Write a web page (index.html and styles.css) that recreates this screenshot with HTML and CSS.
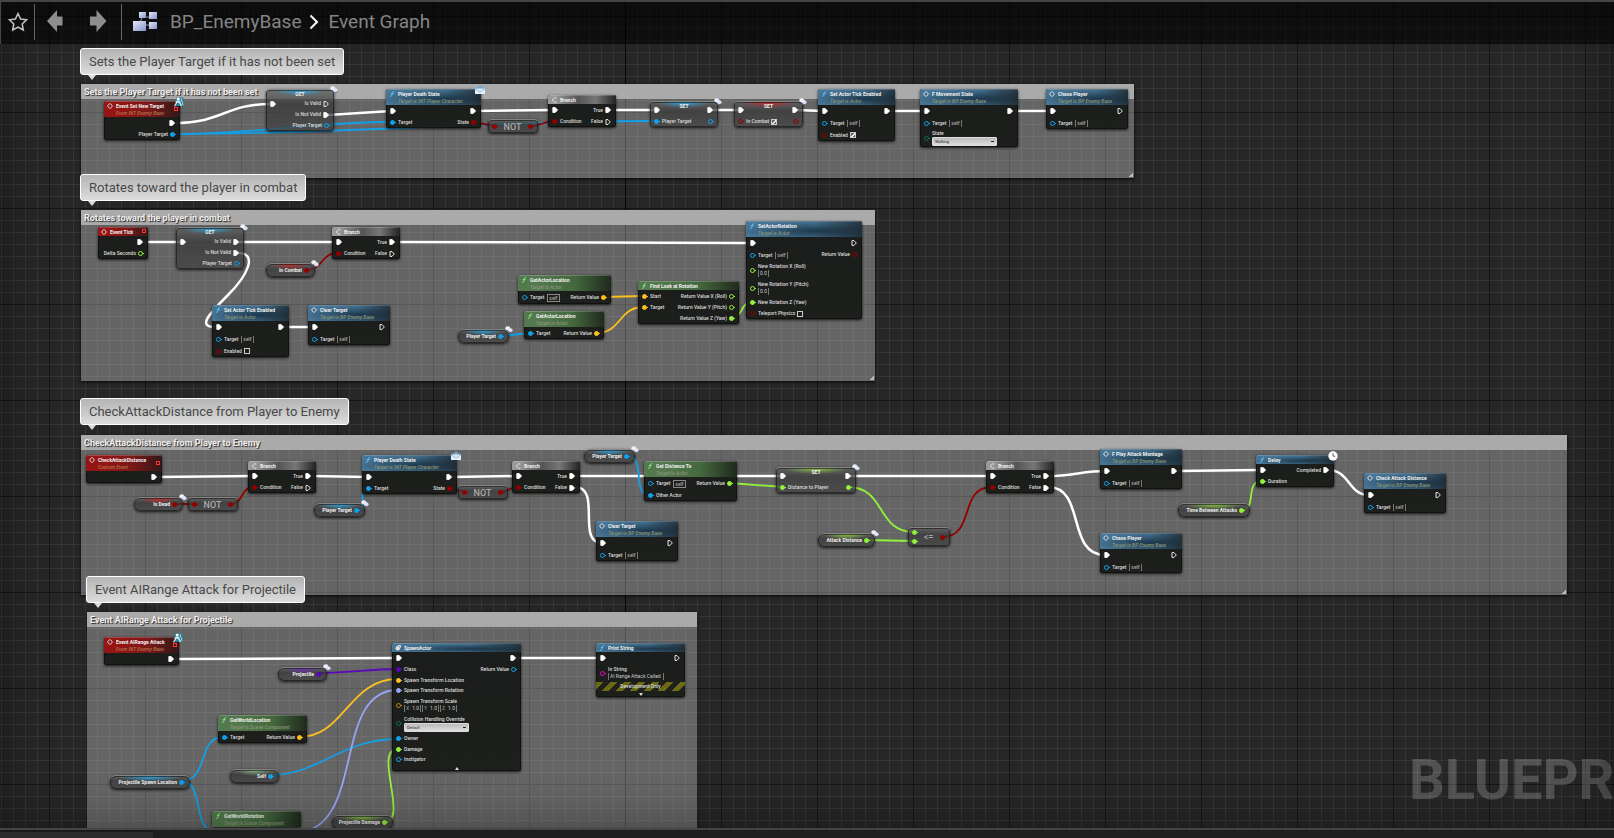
FILE: index.html
```html
<!DOCTYPE html>
<html lang="en">
<head>
<meta charset="utf-8">
<title>BP_EnemyBase – Event Graph</title>
<link rel="stylesheet" href="styles.css">
</head>
<body>
<svg class="defs" aria-hidden="true">
  <defs>
    <symbol id="x1" viewBox="0 0 6 6"><path d="M.8.5h2.4L5.6 3 3.200 5.500H.8z" fill="#fff" stroke="#fff" stroke-width=".8" stroke-linejoin="round"/></symbol>
    <symbol id="x0" viewBox="0 0 6 6"><path d="M1 .6h2L5.300 3 3 5.400H1z" fill="none" stroke="#fff" stroke-width=".9" stroke-linejoin="round"/></symbol>
    <symbol id="fn" viewBox="0 0 6 6"><path d="M5.200.7C3.500.2 3.400 1.500 3.100 3S2.500 5.700.9 5.300M1.800 2.600h2.600" fill="none" stroke="currentColor" stroke-width=".9"/></symbol>
    <symbol id="ev" viewBox="0 0 6 6"><path d="M2.400.6.6 3l1.800 2.400M3.500.6 5.400 3 3.500 5.400M2.600.8h.8M2.600 5.200h.8" fill="none" stroke="currentColor" stroke-width=".9"/></symbol>
    <symbol id="br" viewBox="0 0 6 6"><path d="M5.400.9H3.500L1 3l2.500 2.100h1.900" fill="none" stroke="currentColor" stroke-width="1" stroke-dasharray="2.200 .5"/></symbol>
    <symbol id="sp" viewBox="0 0 6 6"><circle cx="2.800" cy="3.300" r="2.300" fill="#ddd"/><path d="M3 .5h2.600v2.200" fill="none" stroke="#fff" stroke-width=".8"/></symbol>
    <symbol id="clover" viewBox="0 0 8 8"><ellipse cx="2.800" cy="2.300" rx="2.500" ry="2" fill="#eef1fa"/><ellipse cx="5.300" cy="4.200" rx="2.300" ry="1.900" fill="#dfe5f5"/><path d="M3 5.600C4.500 7 7 7 7.600 5.200" fill="none" stroke="#6a7796" stroke-width="1"/></symbol>
    <symbol id="mail" viewBox="0 0 10 10"><path d="M0 4 5 .6 10 4z" fill="#6fa5cf"/><path d="M0 3.600h10V9H0z" fill="#e4f0f8"/><path d="M0 3.600 5 7l5-3.400" fill="none" stroke="#8fb9d8" stroke-width="1"/></symbol>
    <symbol id="iface" viewBox="0 0 10 10"><path d="M2 .5h7.500V9H2z" fill="#2b7f9b"/><path d="M7 1 9 8" stroke="#9fd8e6" stroke-width="1"/><circle cx="4.200" cy="2" r="1.500" fill="#fff"/><path d="M.6 9.300l2.600-5L6 6l1.500 3M1.500 5l5-1" stroke="#e8f7fb" stroke-width="1.200" fill="none"/></symbol>
    <symbol id="clock" viewBox="0 0 10 10"><circle cx="5" cy="5" r="4.700" fill="#fff"/><path d="M5 2v3.200h2.200" fill="none" stroke="#555" stroke-width=".9"/></symbol>
  </defs>
</svg>

<main class="graph">
  <div class="canvas">
    <p class="watermark">BLUEPRINT</p>

    <section class="comment c-target"><h2>Sets the Player Target if it has not been set</h2></section>
    <section class="comment c-rotate"><h2>Rotates toward the player in combat</h2></section>
    <section class="comment c-check"><h2>CheckAttackDistance from Player to Enemy</h2></section>
    <section class="comment c-range"><h2>Event AIRange Attack for Projectile</h2></section>

    <svg class="wires" aria-hidden="true">
      <g class="w-exec">
        <path d="M174 123C224 123 224 104 271 104"/><path d="M328 115 391 111"/><path d="M475 111 553 110"/><path d="M610 110H655"/><path d="M711 110H740"/><path d="M796 110 823 111"/><path d="M889 111H925"/><path d="M1012 111H1051"/>
        <path d="M142 242H182"/><path d="M237 242H336"/><path d="M238 253C258 253 248 275 228 295C206 317 198 327 216 327"/><path d="M283 327H313"/><path d="M395 242 750 243"/>
        <path d="M156 477 253 476"/><path d="M311 476 367 477"/><path d="M451 477 517 476"/><path d="M574 476H782"/><path d="M850 476H991"/><path d="M575 487C602 487 576 543 602 543"/>
        <path d="M1048 476C1070 476 1085 471 1105 471"/><path d="M1048 487C1086 487 1066 555 1105 555"/><path d="M1176 471 1260 470"/><path d="M1328 470C1350 470 1348 495 1369 495"/>
        <path d="M172 659 397 658"/><path d="M514 658H601"/>
      </g>
      <g class="w-data">
        <g class="blue"><path d="M173 134C260 134 310 122 392 122"/><path d="M173 134C340 134 490 121 656 121"/><path d="M501 336 530 333"/><path d="M356 510C370 510 356 488 368 488"/><path d="M626 456C648 456 630 495 650 495"/><path d="M270 775C320 775 340 739 398 739"/><path d="M181 781C210 781 196 737 224 737"/><path d="M181 781C206 781 190 833 218 833"/></g>
        <g class="red"><path d="M473 122 494 126"/><path d="M530 126C540 126 544 121 555 121"/><path d="M306 270C324 270 320 253 338 253"/><path d="M174 504H194"/><path d="M230 504C244 504 240 487 254 487"/><path d="M449 488 464 492"/><path d="M500 492C508 492 510 487 518 487"/><path d="M942 537C976 537 958 487 992 487"/></g>
        <g class="gold"><path d="M603 297 644 296"/><path d="M596 333C622 333 618 307 644 307"/><path d="M299 737C345 737 348 679 398 679"/></g>
        <g class="lime"><path d="M732 317C744 317 740 302 752 302"/><path d="M729 483 783 487"/><path d="M848 487C886 487 876 532 914 532"/><path d="M866 540 914 541"/><path d="M1241 510C1258 510 1244 481 1262 481"/><path d="M384 822C410 822 372 749 398 749"/></g>
        <g class="purple"><path d="M318 673C345 673 370 669 398 669"/></g>
        <g class="lav"><path d="M293 833C368 833 330 690 398 690"/></g>
      </g>
    </svg>

    <!-- Sets the player target -->
    <article class="node event n-set-new"><header><svg><use href="#ev"/></svg><div><h3>Event Set New Target</h3><p>From INT Enemy Base</p></div><b class="stop"></b></header>
      <div class="pins"><ul></ul><ul class="out"><li class="x"><svg><use href="#x1"/></svg></li><li>Player Target<i class="blue on"></i></li></ul></div><svg class="badge low"><use href="#iface"/></svg></article>
    <article class="node glass tint-blue get n-get1"><header><h3>GET</h3></header>
      <div class="pins"><ul><li><svg><use href="#x1"/></svg></li></ul><ul class="out"><li>Is Valid<svg><use href="#x0"/></svg></li><li>Is Not Valid<svg><use href="#x1"/></svg></li><li>Player Target<i class="blue"></i></li></ul></div><svg class="badge small"><use href="#clover"/></svg></article>
    <article class="node func n-death1"><header><svg><use href="#fn"/></svg><div><h3>Player Death State</h3><p>Target is INT Player Character</p></div></header>
      <div class="pins"><ul><li class="x"><svg><use href="#x1"/></svg></li><li><i class="blue on"></i>Target</li></ul><ul class="out"><li class="x"><svg><use href="#x1"/></svg></li><li>State<i class="red on"></i></li></ul></div><svg class="badge"><use href="#mail"/></svg></article>
    <article class="node glass op n-not1"><i class="red on"></i><h3>NOT</h3><i class="red on"></i></article>
    <article class="node flow n-branch1"><header><svg><use href="#br"/></svg><h3>Branch</h3></header>
      <div class="pins"><ul><li class="x"><svg><use href="#x1"/></svg></li><li><i class="red on"></i>Condition</li></ul><ul class="out"><li class="x">True<svg><use href="#x1"/></svg></li><li>False<svg><use href="#x0"/></svg></li></ul></div></article>
    <article class="node glass tint-blue set n-set1"><header><h3>SET</h3></header>
      <div class="pins"><ul><li class="x"><svg><use href="#x1"/></svg></li><li><i class="blue on"></i>Player Target</li></ul><ul class="out"><li class="x"><svg><use href="#x1"/></svg></li><li><i class="blue"></i></li></ul></div><svg class="badge small"><use href="#clover"/></svg></article>
    <article class="node glass tint-red set n-set2"><header><h3>SET</h3></header>
      <div class="pins"><ul><li class="x"><svg><use href="#x1"/></svg></li><li><i class="red"></i><label>In Combat <input type="checkbox" checked></label></li></ul><ul class="out"><li class="x"><svg><use href="#x1"/></svg></li><li><i class="red"></i></li></ul></div><svg class="badge small"><use href="#clover"/></svg></article>
    <article class="node func n-tick1"><header><svg><use href="#fn"/></svg><div><h3>Set Actor Tick Enabled</h3><p>Target is Actor</p></div></header>
      <div class="pins"><ul><li class="x"><svg><use href="#x1"/></svg></li><li class="x"><i class="blue"></i>Target<span class="self">self</span></li><li class="x"><i class="red"></i><label>Enabled <input type="checkbox" checked></label></li></ul><ul class="out"><li class="x"><svg><use href="#x1"/></svg></li></ul></div></article>
    <article class="node func n-move"><header><svg><use href="#ev"/></svg><div><h3>F Movement State</h3><p>Target is BP Enemy Base</p></div></header>
      <div class="pins"><ul><li class="x"><svg><use href="#x1"/></svg></li><li class="x"><i class="blue"></i>Target<span class="self">self</span></li><li class="tall"><i class="teal"></i><label>State<select><option>Walking</option></select></label></li></ul><ul class="out"><li class="x"><svg><use href="#x1"/></svg></li></ul></div></article>
    <article class="node func call n-chase1"><header><svg><use href="#ev"/></svg><div><h3>Chase Player</h3><p>Target is BP Enemy Base</p></div></header>
      <div class="pins"><ul><li class="x"><svg><use href="#x1"/></svg></li><li class="x"><i class="blue"></i>Target<span class="self">self</span></li></ul><ul class="out"><li class="x"><svg><use href="#x0"/></svg></li></ul></div></article>

    <!-- Rotates toward the player -->
    <article class="node event n-evtick"><header><svg><use href="#ev"/></svg><h3>Event Tick</h3><b class="stop"></b></header>
      <div class="pins"><ul></ul><ul class="out"><li class="x"><svg><use href="#x1"/></svg></li><li>Delta Seconds<i class="lime"></i></li></ul></div></article>
    <article class="node glass tint-blue get n-get2"><header><h3>GET</h3></header>
      <div class="pins"><ul><li><svg><use href="#x1"/></svg></li></ul><ul class="out"><li>Is Valid<svg><use href="#x1"/></svg></li><li>Is Not Valid<svg><use href="#x1"/></svg></li><li>Player Target<i class="blue"></i></li></ul></div><svg class="badge small"><use href="#clover"/></svg></article>
    <article class="node flow n-branch2"><header><svg><use href="#br"/></svg><h3>Branch</h3></header>
      <div class="pins"><ul><li class="x"><svg><use href="#x1"/></svg></li><li><i class="red on"></i>Condition</li></ul><ul class="out"><li class="x">True<svg><use href="#x1"/></svg></li><li>False<svg><use href="#x0"/></svg></li></ul></div></article>
    <article class="node glass tint-red var n-incombat"><h3>In Combat</h3><i class="red on"></i><svg class="badge small"><use href="#clover"/></svg></article>
    <article class="node func n-tick2"><header><svg><use href="#fn"/></svg><div><h3>Set Actor Tick Enabled</h3><p>Target is Actor</p></div></header>
      <div class="pins"><ul><li class="x"><svg><use href="#x1"/></svg></li><li class="x"><i class="blue"></i>Target<span class="self">self</span></li><li class="x"><i class="red"></i><label>Enabled <input type="checkbox"></label></li></ul><ul class="out"><li class="x"><svg><use href="#x1"/></svg></li></ul></div></article>
    <article class="node func call n-clear1"><header><svg><use href="#ev"/></svg><div><h3>Clear Target</h3><p>Target is BP Enemy Base</p></div></header>
      <div class="pins"><ul><li class="x"><svg><use href="#x1"/></svg></li><li class="x"><i class="blue"></i>Target<span class="self">self</span></li></ul><ul class="out"><li class="x"><svg><use href="#x0"/></svg></li></ul></div></article>
    <article class="node glass tint-blue var n-pt1"><h3>Player Target</h3><i class="blue on"></i><svg class="badge small"><use href="#clover"/></svg></article>
    <article class="node pure n-loc1"><header><svg><use href="#fn"/></svg><div><h3>GetActorLocation</h3><p>Target is Actor</p></div></header>
      <div class="pins"><ul><li class="wide"><i class="blue"></i>Target<span class="self boxed">self</span></li></ul><ul class="out"><li class="x">Return Value<i class="gold on"></i></li></ul></div></article>
    <article class="node pure n-loc2"><header><svg><use href="#fn"/></svg><div><h3>GetActorLocation</h3><p>Target is Actor</p></div></header>
      <div class="pins"><ul><li class="x"><i class="blue on"></i>Target</li></ul><ul class="out"><li class="x">Return Value<i class="gold on"></i></li></ul></div></article>
    <article class="node pure n-look"><header><svg><use href="#fn"/></svg><h3>Find Look at Rotation</h3></header>
      <div class="pins"><ul><li class="x"><i class="gold on"></i>Start</li><li><i class="gold on"></i>Target</li></ul><ul class="out"><li class="x">Return Value X (Roll)<i class="lime"></i></li><li>Return Value Y (Pitch)<i class="lime"></i></li><li>Return Value Z (Yaw)<i class="lime on"></i></li></ul></div></article>
    <article class="node func n-setrot"><header><svg><use href="#fn"/></svg><div><h3>SetActorRotation</h3><p>Target is Actor</p></div></header>
      <div class="pins"><ul><li class="x"><svg><use href="#x1"/></svg></li><li class="x"><i class="blue"></i>Target<span class="self">self</span></li><li class="tall"><i class="lime"></i><label>New Rotation X (Roll)<input class="num" value="0.0"></label></li><li class="tall"><i class="lime"></i><label>New Rotation Y (Pitch)<input class="num" value="0.0"></label></li><li><i class="lime on"></i>New Rotation Z (Yaw)</li><li><i class="red"></i><label>Teleport Physics <input type="checkbox"></label></li></ul><ul class="out"><li class="x"><svg><use href="#x0"/></svg></li><li>Return Value<i class="red"></i></li></ul></div></article>

    <!-- Check attack distance -->
    <article class="node event n-checkev"><header><svg><use href="#ev"/></svg><div><h3>CheckAttackDistance</h3><p>Custom Event</p></div><b class="stop"></b></header>
      <div class="pins"><ul></ul><ul class="out"><li class="x"><svg><use href="#x1"/></svg></li></ul></div></article>
    <article class="node glass tint-red var n-isdead"><h3>Is Dead</h3><i class="red on"></i><svg class="badge small"><use href="#clover"/></svg></article>
    <article class="node glass op n-not2"><i class="red on"></i><h3>NOT</h3><i class="red on"></i></article>
    <article class="node flow n-branch3"><header><svg><use href="#br"/></svg><h3>Branch</h3></header>
      <div class="pins"><ul><li class="x"><svg><use href="#x1"/></svg></li><li><i class="red on"></i>Condition</li></ul><ul class="out"><li class="x">True<svg><use href="#x1"/></svg></li><li>False<svg><use href="#x0"/></svg></li></ul></div></article>
    <article class="node func n-death2"><header><svg><use href="#fn"/></svg><div><h3>Player Death State</h3><p>Target is INT Player Character</p></div></header>
      <div class="pins"><ul><li class="x"><svg><use href="#x1"/></svg></li><li><i class="blue on"></i>Target</li></ul><ul class="out"><li class="x"><svg><use href="#x1"/></svg></li><li>State<i class="red on"></i></li></ul></div><svg class="badge"><use href="#mail"/></svg></article>
    <article class="node glass tint-blue var n-pt2"><h3>Player Target</h3><i class="blue on"></i><svg class="badge small"><use href="#clover"/></svg></article>
    <article class="node glass op n-not3"><i class="red on"></i><h3>NOT</h3><i class="red on"></i></article>
    <article class="node flow n-branch4"><header><svg><use href="#br"/></svg><h3>Branch</h3></header>
      <div class="pins"><ul><li class="x"><svg><use href="#x1"/></svg></li><li><i class="red on"></i>Condition</li></ul><ul class="out"><li class="x">True<svg><use href="#x1"/></svg></li><li>False<svg><use href="#x1"/></svg></li></ul></div></article>
    <article class="node glass tint-blue var n-pt3"><h3>Player Target</h3><i class="blue on"></i><svg class="badge small"><use href="#clover"/></svg></article>
    <article class="node pure n-dist"><header><svg><use href="#fn"/></svg><div><h3>Get Distance To</h3><p>Target is Actor</p></div></header>
      <div class="pins"><ul><li class="wide"><i class="blue"></i>Target<span class="self boxed">self</span></li><li><i class="blue on"></i>Other Actor</li></ul><ul class="out"><li class="x">Return Value<i class="lime on"></i></li></ul></div></article>
    <article class="node glass tint-lime set n-set3"><header><h3>SET</h3></header>
      <div class="pins"><ul><li class="x"><svg><use href="#x1"/></svg></li><li><i class="lime on"></i>Distance to Player</li></ul><ul class="out"><li class="x"><svg><use href="#x1"/></svg></li><li><i class="lime on"></i></li></ul></div><svg class="badge small"><use href="#clover"/></svg></article>
    <article class="node func call n-clear2"><header><svg><use href="#ev"/></svg><div><h3>Clear Target</h3><p>Target is BP Enemy Base</p></div></header>
      <div class="pins"><ul><li class="x"><svg><use href="#x1"/></svg></li><li class="x"><i class="blue"></i>Target<span class="self">self</span></li></ul><ul class="out"><li class="x"><svg><use href="#x0"/></svg></li></ul></div></article>
    <article class="node glass tint-lime var n-atkdist"><h3>Attack Distance</h3><i class="lime on"></i><svg class="badge small"><use href="#clover"/></svg></article>
    <article class="node glass op n-lte"><span class="stack"><i class="lime on"></i><i class="lime on"></i></span><h3>&lt;=</h3><i class="red on"></i></article>
    <article class="node flow n-branch5"><header><svg><use href="#br"/></svg><h3>Branch</h3></header>
      <div class="pins"><ul><li class="x"><svg><use href="#x1"/></svg></li><li><i class="red on"></i>Condition</li></ul><ul class="out"><li class="x">True<svg><use href="#x1"/></svg></li><li>False<svg><use href="#x1"/></svg></li></ul></div></article>
    <article class="node func call n-montage"><header><svg><use href="#ev"/></svg><div><h3>F Play Attack Montage</h3><p>Target is BP Enemy Base</p></div></header>
      <div class="pins"><ul><li class="x"><svg><use href="#x1"/></svg></li><li class="x"><i class="blue"></i>Target<span class="self">self</span></li></ul><ul class="out"><li class="x"><svg><use href="#x1"/></svg></li></ul></div></article>
    <article class="node func call n-chase2"><header><svg><use href="#ev"/></svg><div><h3>Chase Player</h3><p>Target is BP Enemy Base</p></div></header>
      <div class="pins"><ul><li class="x"><svg><use href="#x1"/></svg></li><li class="x"><i class="blue"></i>Target<span class="self">self</span></li></ul><ul class="out"><li class="x"><svg><use href="#x0"/></svg></li></ul></div></article>
    <article class="node func n-delay"><header><svg><use href="#fn"/></svg><h3>Delay</h3></header>
      <div class="pins"><ul><li class="x"><svg><use href="#x1"/></svg></li><li><i class="lime on"></i>Duration</li></ul><ul class="out"><li class="x">Completed<svg><use href="#x1"/></svg></li></ul></div><svg class="badge"><use href="#clock"/></svg></article>
    <article class="node glass tint-lime var n-tba"><h3>Time Between Attacks</h3><i class="lime on"></i></article>
    <article class="node func call n-checkcall"><header><svg><use href="#ev"/></svg><div><h3>Check Attack Distance</h3><p>Target is BP Enemy Base</p></div></header>
      <div class="pins"><ul><li class="x"><svg><use href="#x1"/></svg></li><li class="x"><i class="blue"></i>Target<span class="self">self</span></li></ul><ul class="out"><li class="x"><svg><use href="#x0"/></svg></li></ul></div></article>

    <!-- AI range attack -->
    <article class="node event n-range"><header><svg><use href="#ev"/></svg><div><h3>Event AIRange Attack</h3><p>From INT Enemy Base</p></div><b class="stop"></b></header>
      <div class="pins"><ul></ul><ul class="out"><li class="x"><svg><use href="#x1"/></svg></li></ul></div><svg class="badge low"><use href="#iface"/></svg></article>
    <article class="node glass tint-purple var n-proj"><h3>Projectile</h3><i class="purple on"></i><svg class="badge small"><use href="#clover"/></svg></article>
    <article class="node pure n-wloc"><header><svg><use href="#fn"/></svg><div><h3>GetWorldLocation</h3><p>Target is Scene Component</p></div></header>
      <div class="pins"><ul><li class="x"><i class="blue on"></i>Target</li></ul><ul class="out"><li class="x">Return Value<i class="gold on"></i></li></ul></div></article>
    <article class="node glass tint-green var n-self"><h3>Self</h3><i class="blue on"></i></article>
    <article class="node glass tint-blue var n-spawnloc"><h3>Projectile Spawn Location</h3><i class="blue on"></i></article>
    <article class="node pure n-wrot"><header><svg><use href="#fn"/></svg><div><h3>GetWorldRotation</h3><p>Target is Scene Component</p></div></header></article>
    <article class="node glass tint-lime var n-damage"><h3>Projectile Damage</h3><i class="lime on"></i></article>
    <article class="node func n-spawn"><header><svg><use href="#sp"/></svg><h3>SpawnActor</h3></header>
      <div class="pins"><ul><li class="x"><svg><use href="#x1"/></svg></li><li><i class="purple on"></i>Class</li><li class="tight"><i class="gold on"></i>Spawn Transform Location</li><li><i class="lav on"></i>Spawn Transform Rotation</li>
        <li class="tall"><i class="amber"></i><div class="field">Spawn Transform Scale<span class="vec"><label>X<input value="1.0"></label><label>Y<input value="1.0"></label><label>Z<input value="1.0"></label></span></div></li>
        <li class="tall drop"><i class="teal"></i><label>Collision Handling Override<select><option>Default</option></select></label></li><li><i class="blue on"></i>Owner</li><li class="tight"><i class="lime on"></i>Damage</li><li><i class="blue"></i>Instigator</li></ul>
        <ul class="out"><li class="x"><svg><use href="#x1"/></svg></li><li>Return Value<i class="blue"></i></li></ul></div><button class="expand up" aria-label="Collapse"></button></article>
    <article class="node func n-print"><header><svg><use href="#fn"/></svg><h3>Print String</h3></header>
      <div class="pins"><ul><li class="x"><svg><use href="#x1"/></svg></li><li class="tall"><i class="pink"></i><label>In String<input class="str" value="AI Range Attack Called"></label></li></ul><ul class="out"><li class="x"><svg><use href="#x0"/></svg></li></ul></div><p class="dev">Development Only</p><button class="expand" aria-label="Expand"></button></article>

    <p class="bubble b-target">Sets the Player Target if it has not been set</p>
    <p class="bubble b-rotate">Rotates toward the player in combat</p>
    <p class="bubble b-check">CheckAttackDistance from Player to Enemy</p>
    <p class="bubble b-range">Event AIRange Attack for Projectile</p>
  </div>

  <nav class="toolbar" aria-label="Graph navigation">
    <button class="fav" aria-label="Favorite"><svg viewBox="0 0 20 20"><path d="M10 1.500 12.600 7l6 .8-4.400 4.200 1.100 6L10 15.100 4.700 18l1.100-6L1.400 7.800l6-.8z" fill="none" stroke="#c4c4c4" stroke-width="1.500"/></svg></button>
    <span class="sep"></span>
    <button class="nav" aria-label="Back"><svg viewBox="0 0 18 24"><path d="M1 11 11 0v6.500h5.500v9H11V22z" fill="#8e8e8e"/></svg></button>
    <button class="nav" aria-label="Forward"><svg viewBox="0 0 18 24"><path d="M17.500 11 7.500 0v6.500H1v9h6.500V22z" fill="#8e8e8e"/></svg></button>
    <span class="sep"></span>
    <svg class="graph-icon" viewBox="0 0 24 20"><defs><linearGradient id="gi" x2="1" y2="1"><stop offset="0" stop-color="#e6eaf8"/><stop offset="1" stop-color="#8391cc"/></linearGradient></defs><path d="M12 5h4M10 13h6M9 6 7 10" stroke="#99a" stroke-width="1"/><g fill="url(#gi)"><rect x="6" y="0" width="7" height="6"/><rect x="16" y="0" width="8" height="7"/><rect x="0" y="9" width="13" height="10"/><rect x="16" y="10" width="8" height="7"/></g></svg>
    <a href="#">BP_EnemyBase</a>
    <svg class="chev" viewBox="0 0 10 16"><path d="M1.500 1.500 8 8l-6.500 6.500" fill="none" stroke="#fff" stroke-width="2"/></svg>
    <a href="#">Event Graph</a>
  </nav>
</main>
<footer class="dock"><div class="tab"></div></footer>
</body>
</html>
```

FILE: styles.css
```css
* { box-sizing: border-box; }

body {
  margin: 0;
  height: 100vh;
  display: flex;
  flex-direction: column;
  overflow: hidden;
  background: #262626;
  font-family: Roboto, "Liberation Sans", sans-serif;
}

h2, h3, p, ul { margin: 0; padding: 0; list-style: none; }
button { border: 0; padding: 0; background: none; }
.defs { position: absolute; width: 0; height: 0; }

/* Graph surface */
.graph {
  position: relative;
  flex: 1;
  overflow: hidden;
}

.canvas {
  position: absolute;
  inset: 0;
  overflow: hidden;
  background:
    linear-gradient(#060606, #060606) 625px 0 / 1px 100% no-repeat,
    linear-gradient(90deg, #161616 1px, transparent 1px) 49px 0 / 96px 96px,
    linear-gradient(#161616 1px, transparent 1px) 0 16px / 96px 96px,
    linear-gradient(90deg, #353535 1px, transparent 1px) 1px 0 / 12px 12px,
    linear-gradient(#353535 1px, #262626 1px) 0 4px / 12px 12px;
}

.canvas::after {
  content: "";
  position: absolute;
  inset: 0;
  pointer-events: none;
  box-shadow: inset 0 0 50px rgba(0, 0, 0, .4);
}

.watermark {
  position: absolute;
  left: 1409px;
  bottom: 10px;
  font-size: 56px;
  line-height: 76px;
  font-weight: 700;
  color: rgba(255, 255, 255, .2);
}

/* Toolbar over the canvas */
.toolbar {
  position: relative;
  display: flex;
  align-items: center;
  height: 44px;
  padding: 0 7px 2px;
  background: rgba(0, 0, 0, .6);
  border-top: 2px solid #454545;
  border-left: 1px solid #454545;
}

.toolbar svg { display: block; }
.toolbar a { font-size: 19px; line-height: 24px; color: #858585; text-decoration: none; }
.fav svg { width: 20px; height: 20px; }
.nav { margin-left: 11px; }
.nav + .nav { margin-left: 25px; }
.nav svg { width: 18px; height: 24px; }
.sep { width: 1px; height: 36px; margin-left: 6px; background: #666; }
.nav + .sep { margin-left: 14px; }
.graph-icon { width: 24px; height: 20px; margin: 0 13px 0 11px; }
.chev { width: 10px; height: 16px; margin: 0 9px 0 8px; }

/* Comment boxes */
.comment {
  position: absolute;
  background: rgba(255, 255, 255, .29);
  box-shadow: 0 1px 3px rgba(0, 0, 0, .8);
}

.comment::after {
  content: "";
  position: absolute;
  right: 1px;
  bottom: 1px;
  width: 4px;
  height: 4px;
  background: linear-gradient(135deg, transparent 50%, #bbb 50%);
}

.comment h2 {
  height: 15px;
  padding-left: 3px;
  overflow: hidden;
  background: #aaa;
  font-size: 9px;
  line-height: 16px;
  font-weight: 700;
  color: #eee;
  text-shadow: 1px 1px 1px #222;
}

.c-target { left: 81px; top: 84px; width: 1053px; height: 94px; }
.c-rotate { left: 81px; top: 210px; width: 794px; height: 171px; }
.c-check { left: 81px; top: 435px; width: 1486px; height: 160px; }
.c-range { left: 87px; top: 612px; width: 610px; height: 240px; }

.bubble {
  position: absolute;
  height: 27px;
  padding: 0 8px;
  border: 1px solid #fff;
  border-radius: 3px;
  background: linear-gradient(#b4b4b4, #dcdcdc);
  font-size: 13px;
  line-height: 25px;
  white-space: nowrap;
  color: #484848;
}

.bubble::after {
  content: "";
  position: absolute;
  left: 7px;
  top: 26px;
  border: 4px solid transparent;
  border-top: 5px solid #ddd;
  border-bottom: 0;
}

.b-target { left: 80px; top: 48px; }
.b-rotate { left: 80px; top: 174px; }
.b-check { left: 80px; top: 398px; }
.b-range { left: 86px; top: 576px; }

/* Wires */
.wires { position: absolute; left: 0; top: 0; width: 100%; height: 100%; }
.wires path { fill: none; }
.w-exec { stroke: #fff; stroke-width: 2.5; }
.w-data { stroke-width: 1.8; }
.w-data g { stroke: currentColor; }

.blue { color: #12a0e8; }
.red { color: #930000; }
.lime { color: #93f03c; }
.gold { color: #fdc01f; }
.amber { color: #b8860b; }
.teal { color: #0b6b5c; }
.purple { color: #5a08b8; }
.lav { color: #98a4f4; }
.pink { color: #e600c8; }

/* Nodes */
.node {
  position: absolute;
  border-radius: 2px;
  background: linear-gradient(rgba(22, 25, 23, .95), rgba(26, 28, 25, .96));
  box-shadow: inset 0 0 0 1px rgba(0, 0, 0, .4), 0 1px 3px rgba(0, 0, 0, .8);
  font-size: 5px;
  line-height: 7px;
  font-weight: 500;
  white-space: nowrap;
  color: #dcdcdc;
}

.node h3 { font-size: 5px; line-height: 7px; font-weight: 700; color: #f0f0f0; }
.node svg { display: block; flex: none; width: 6px; height: 6px; }

.node > header {
  display: flex;
  align-items: flex-start;
  gap: 3px;
  padding: 1px 2px 0 3px;
  border-radius: 2px 2px 0 0;
  border-top: 1px solid rgba(255, 255, 255, .2);
  color: #e4e4e4;
}

.node header p { font-style: italic; color: #8b9678; }
.func > header { background: linear-gradient(90deg, transparent 60%, rgba(20, 25, 28, .7)), radial-gradient(ellipse at 60% 60%, #1c384c, #477595 75%); }
.func header use[href="#fn"] { color: #5cc6ff; }
.pure > header { background: linear-gradient(90deg, #54794f 20%, #45693f 60%, #1f2a1d); }
.pure header svg { color: #8cf08c; }
.event > header { background: linear-gradient(90deg, #951414 20%, #7c1818 60%, #301818); }
.event header p { color: #b2744a; }
.flow > header { background: linear-gradient(90deg, #999 10%, #555 45%, #777 70%, #222); }

.stop { width: 4px; height: 4px; margin: 0 0 0 auto; border: 1px solid #f33; }
header div + .stop { margin-top: 4px; }

.pins { display: flex; justify-content: space-between; }
.pins li { display: flex; align-items: center; gap: 3px; height: 11px; padding-left: 4px; }
.pins li.x { height: 12px; }
.pins li.wide { height: 13px; }
.pins li.tight { height: 10px; }
.pins li.tall { height: 18px; }
.pins li.drop { height: 19px; }
.pins .out li { justify-content: flex-end; gap: 2px; padding: 0 5px 0 0; }

.node i {
  position: relative;
  flex: none;
  width: 5px;
  height: 5px;
  border: 1px solid currentColor;
  border-radius: 50%;
}

.node i::after {
  content: "";
  position: absolute;
  right: -2px;
  top: 1px;
  width: 1px;
  height: 1px;
  background: currentColor;
}

.node i.on { background: currentColor; }

.self {
  padding: 0 1px;
  border: solid #777;
  border-width: 0 1px;
  color: #aaa;
}

.self.boxed { border: 1px solid #888; line-height: 6px; }

.node label { display: flex; align-items: center; gap: 2px; }
.tall label, .field { display: flex; flex-direction: column; align-items: flex-start; gap: 0; }

.node input {
  appearance: none;
  margin: 0;
  padding: 0 1px;
  height: 7px;
  border: solid #777;
  border-width: 0 1px;
  background: none;
  font: 5px/7px Roboto, "Liberation Sans", sans-serif;
  color: #ccc;
}

.node input[type="checkbox"] { width: 6px; height: 6px; padding: 0; border: 1px solid #ccc; }
.node input[type="checkbox"]:checked { background: linear-gradient(135deg, transparent 40%, #eee 40%, #eee 65%, transparent 65%) #666; }
.node .num { width: 11px; }
.node .str { width: 56px; }
.vec { display: flex; gap: 1px; color: #888; }
.field .vec label { flex-direction: row; gap: 3px; width: 17px; padding-left: 1px; border: solid #777; border-width: 0 1px; }
.vec input { width: 9px; border: 0; padding: 0; }

.node select {
  width: 65px;
  height: 9px;
  margin: 0;
  padding: 0 2px;
  appearance: none;
  border: 1px solid #ddd;
  border-radius: 1px;
  background: linear-gradient(#222, #222) 58px 3px / 3px 1px no-repeat, linear-gradient(#bbb, #ddd);
  font: 4px/7px Roboto, "Liberation Sans", sans-serif;
  color: #222;
}

.badge { position: absolute; right: -4px; top: -4px; }
.node .badge { width: 10px; height: 10px; }
.node .badge.small { width: 8px; height: 8px; }

/* Translucent variable and operator nodes */
.glass {
  --tint: transparent;
  border-radius: 4px;
  border-top: 1px solid rgba(190, 190, 190, .5);
  background:
    radial-gradient(ellipse 40% 6px at 50% 0, var(--tint), transparent),
    linear-gradient(rgba(95, 95, 95, .75), rgba(55, 55, 55, .75) 35%, rgba(66, 66, 66, .75));
  box-shadow: inset 0 0 0 1px rgba(20, 20, 20, .6), 0 1px 3px rgba(0, 0, 0, .8);
}

.glass > header { border: 0; padding: 0; justify-content: center; }
.get > header { height: 8px; padding-top: 1px; }
.set > header { height: 2px; padding-top: 1px; }
.tint-blue { --tint: #2da4dd; }
.tint-red { --tint: #c62828; }
.tint-lime { --tint: #86c440; }
.tint-green { --tint: #7fae7f; }
.tint-purple { --tint: #6a2fb8; }

.var, .op { display: flex; align-items: center; height: 14px; padding-bottom: 1px; }
.var { justify-content: flex-end; gap: 2px; padding-right: 6px; border-radius: 6px; }
.op { justify-content: space-between; padding: 0 5px 0 4px; }
.op h3 { font-size: 9px; line-height: 12px; font-weight: 500; color: #aaa; }
.stack { display: flex; flex-direction: column; gap: 4px; }

.dev {
  height: 9px;
  text-align: center;
  line-height: 9px;
  background: repeating-linear-gradient(135deg, #6c6a14 0 5px, #20211a 5px 10px);
}

.expand { display: block; width: 100%; height: 6px; }
.expand::before {
  content: "";
  display: block;
  width: 0;
  margin: 0 auto;
  border: 2px solid transparent;
  border-top: 3px solid #ddd;
  border-bottom: 0;
}
.expand.up::before { border-top: 0; border-bottom: 3px solid #ddd; }

/* Node placement on the graph */
.n-set-new { left: 104px; top: 101px; width: 76px; }
.n-get1 { left: 266px; top: 89px; width: 68px; }
.n-death1 { left: 386px; top: 89px; width: 95px; }
.n-not1 { left: 488px; top: 119px; width: 50px; }
.n-branch1 { left: 548px; top: 95px; width: 68px; }
.n-set1 { left: 650px; top: 101px; width: 68px; }
.n-set2 { left: 734px; top: 101px; width: 69px; }
.n-tick1 { left: 818px; top: 89px; width: 77px; }
.n-move { left: 920px; top: 89px; width: 98px; }
.call { width: 82px; }
.n-chase1 { left: 1046px; top: 89px; }

.n-evtick { left: 98px; top: 227px; width: 50px; }
.n-get2 { left: 176px; top: 227px; width: 68px; }
.n-branch2 { left: 332px; top: 227px; width: 68px; }
.n-incombat { left: 266px; top: 263px; width: 49px; }
.n-tick2 { left: 212px; top: 305px; width: 77px; }
.n-clear1 { left: 308px; top: 305px; }
.n-pt1 { left: 458px; top: 329px; width: 51px; }
.n-loc1 { left: 518px; top: 275px; width: 93px; }
.n-loc2 { left: 524px; top: 311px; width: 80px; }
.n-look { left: 638px; top: 281px; width: 101px; }
.n-setrot { left: 746px; top: 221px; width: 116px; }

.n-checkev { left: 86px; top: 455px; width: 76px; }
.n-isdead { left: 134px; top: 497px; width: 49px; }
.n-not2 { left: 188px; top: 497px; width: 50px; }
.n-branch3 { left: 248px; top: 461px; width: 68px; }
.n-death2 { left: 362px; top: 455px; width: 95px; }
.n-pt2 { left: 314px; top: 503px; width: 51px; }
.n-not3 { left: 458px; top: 485px; width: 50px; }
.n-branch4 { left: 512px; top: 461px; width: 68px; }
.n-pt3 { left: 584px; top: 449px; width: 51px; }
.n-dist { left: 644px; top: 461px; width: 93px; }
.n-set3 { left: 776px; top: 467px; width: 80px; }
.n-clear2 { left: 596px; top: 521px; }
.n-atkdist { left: 818px; top: 533px; width: 57px; }
.n-lte { left: 908px; top: 527px; width: 42px; height: 19px; }
.n-branch5 { left: 986px; top: 461px; width: 68px; }
.n-montage { left: 1100px; top: 449px; }
.n-chase2 { left: 1100px; top: 533px; }
.n-delay { left: 1256px; top: 455px; width: 78px; }
.n-tba { left: 1178px; top: 503px; width: 72px; }
.n-checkcall { left: 1364px; top: 473px; }

.n-range { left: 104px; top: 637px; width: 75px; }
.n-proj { left: 278px; top: 667px; width: 49px; }
.n-wloc { left: 218px; top: 715px; width: 89px; }
.n-self { left: 230px; top: 769px; width: 49px; }
.n-spawnloc { left: 110px; top: 775px; width: 80px; }
.n-wrot { left: 212px; top: 811px; width: 89px; }
.n-damage { left: 332px; top: 815px; width: 61px; }
.n-spawn { left: 392px; top: 643px; width: 129px; }
.n-print { left: 596px; top: 643px; width: 89px; }

/* Strip under the graph */
.dock { height: 10px; border-top: 2px solid #444; background: #1e1e1e; }
.tab { width: 153px; height: 8px; border-top: 2px solid #1a1a1a; background: #2c2c2c; }
```
